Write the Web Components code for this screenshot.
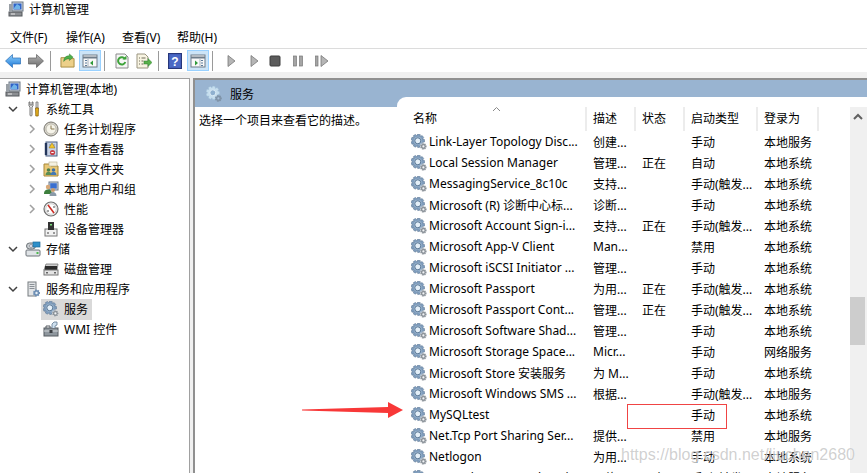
<!DOCTYPE html>
<html lang="zh-CN">
<head>
<meta charset="utf-8">
<title>计算机管理</title>
<style>
  html, body { margin: 0; padding: 0; background: #fff; overflow: hidden; }
  body { font: 12px "Noto Sans", "Noto Sans CJK SC", sans-serif; color: #000; }
</style>
</head>
<body>
<mmc-window>
  <mmc-titlebar slot="title">计算机管理</mmc-titlebar>
  <mmc-menubar slot="menu"></mmc-menubar>
  <mmc-toolbar slot="tools"></mmc-toolbar>
  <tree-pane slot="tree">
    <tree-item level="0" icon="computer">计算机管理(本地)</tree-item>
    <tree-item level="1" arrow="open" icon="tools">系统工具</tree-item>
    <tree-item level="2" arrow="closed" icon="clock">任务计划程序</tree-item>
    <tree-item level="2" arrow="closed" icon="log">事件查看器</tree-item>
    <tree-item level="2" arrow="closed" icon="share">共享文件夹</tree-item>
    <tree-item level="2" arrow="closed" icon="users">本地用户和组</tree-item>
    <tree-item level="2" arrow="closed" icon="perf">性能</tree-item>
    <tree-item level="2" icon="device">设备管理器</tree-item>
    <tree-item level="1" arrow="open" icon="storage">存储</tree-item>
    <tree-item level="2" icon="disk">磁盘管理</tree-item>
    <tree-item level="1" arrow="open" icon="server">服务和应用程序</tree-item>
    <tree-item level="2" icon="gear" selected>服务</tree-item>
    <tree-item level="2" icon="wmi">WMI 控件</tree-item>
  </tree-pane>
  <services-pane slot="content"></services-pane>
  <red-marks slot="marks"></red-marks>
</mmc-window>

<script>
// toothed wheel outline, used by the service icons
function gearPath(cx, cy, outer, inner, teeth) {
  const step = Math.PI * 2 / teeth;
  let d = '';
  for (let i = 0; i < teeth; i++) {
    const a = i * step;
    const pts = [[inner, a - step * .5], [outer, a - step * .26], [outer, a + step * .26], [inner, a + step * .5]];
    pts.forEach(([r, t], j) => {
      d += (i === 0 && j === 0 ? 'M' : 'L') + (cx + r * Math.cos(t)).toFixed(2) + ' ' + (cy + r * Math.sin(t)).toFixed(2);
    });
  }
  return d + 'z';
}
const BIG_GEAR = gearPath(6.8, 6.8, 6.8, 5.1, 9);
const SMALL_GEAR = gearPath(12.4, 12.4, 3.5, 2.5, 7);

const ICONS = {
  computer: `<rect x="4" y="1" width="11" height="9" fill="#cfd6de" stroke="#6d7885"/><rect x="5.5" y="2.5" width="8" height="6" fill="#2f63c8"/><path d="M6 7l3-4 3 2v3H6z" fill="#6fb3e8"/><rect x="1" y="11" width="13" height="4" fill="#8c8f93" stroke="#55585c"/><rect x="3" y="12.5" width="4" height="1" fill="#e8e8e8"/><rect x="1" y="3" width="3" height="8" fill="#9aa0a6"/>`,
  tools: `<path d="M4 1v4l1 1v8a1 1 0 0 0 2 0V6l1-1V1L7 1v3H5V1z" fill="#e8e8e8" stroke="#6b6b6b" stroke-width=".9"/><path d="M11 1h2v6h-2z" fill="#d8d8d8" stroke="#777" stroke-width=".8"/><path d="M10.5 7h3l-.3 8h-2.4z" fill="#e2ad1d" stroke="#8a6410" stroke-width=".8"/>`,
  clock: `<circle cx="8" cy="8" r="7" fill="#d9d6cc" stroke="#77756e"/><circle cx="8" cy="8" r="5" fill="#f6f4ea" stroke="#a9a69b" stroke-width=".7"/><path d="M8 4.5V8h3.5" fill="none" stroke="#8a7a50" stroke-width="1"/>`,
  log: `<rect x="3" y="1" width="11" height="14" fill="#c9d4e6" stroke="#4b5f82"/><path d="M3 2v12" stroke="#24365a" stroke-width="2.4"/><path d="M6 4h6M6 6h6" stroke="#7d8ea8"/><path d="M9 2l3 5H6z" fill="#f2c52e" stroke="#9a7a10" stroke-width=".5"/><circle cx="9.5" cy="11.5" r="2.6" fill="#c8434b"/><path d="M8.3 11.5h2.4" stroke="#fff"/>`,
  share: `<path d="M1 3h6l1 2h7v10H1z" fill="#e9c877" stroke="#a78738"/><rect x="6" y="1" width="8" height="4" fill="#f5f1e2" stroke="#b7ad8c" stroke-width=".6"/><circle cx="5.5" cy="9" r="1.8" fill="#4f7f4a"/><path d="M2.5 14c0-2.5 1.5-3 3-3s3 .5 3 3z" fill="#5a8d52"/><circle cx="10.5" cy="9" r="1.8" fill="#3f6fa8"/><path d="M7.5 14c0-2.5 1.5-3 3-3s3 .5 3 3z" fill="#4378b5"/>`,
  users: `<rect x="6" y="1" width="9" height="8" fill="#cfd9e6" stroke="#6c7a8c"/><rect x="7.2" y="2.2" width="6.6" height="5.4" fill="#3a6fd0"/><circle cx="5" cy="6" r="2.2" fill="#d8a878"/><path d="M1 13c0-3.5 2-4.5 4-4.5S9 9.500 9 13z" fill="#3d7f3d"/><circle cx="10" cy="9" r="2" fill="#c99a6c"/><path d="M6.500 15c0-3 1.800-4 3.500-4s3.500 1 3.500 4z" fill="#8a9aa8"/>`,
  perf: `<circle cx="8" cy="8" r="7" fill="#eeeeee" stroke="#6f6f6f" stroke-width="1.200"/><circle cx="8" cy="8" r="5.200" fill="#fff" stroke="#bbb" stroke-width=".6"/><path d="M5 4l6 8" stroke="#cc2a22" stroke-width="1.500"/><path d="M5 9v2M11 5v2" stroke="#333" stroke-width=".9"/>`,
  device: `<rect x="2" y="8" width="12" height="7" fill="#f1f1f1" stroke="#777"/><rect x="5" y="1" width="6" height="8" fill="#333"/><rect x="7" y="3" width="2" height="1.500" fill="#7de07d"/><rect x="4" y="11" width="2" height="2" fill="#999"/><rect x="10" y="11" width="2" height="2" fill="#999"/>`,
  storage: `<rect x="1" y="9" width="14" height="6" rx="1" fill="#dfe3e6" stroke="#6d7378"/><rect x="1.500" y="2" width="9" height="6" rx="3" fill="#c7ccd0" stroke="#6d7378"/><circle cx="6" cy="5" r="1.500" fill="#eef" stroke="#777" stroke-width=".6"/><rect x="8" y="1" width="7" height="5" fill="#2e8fc9" stroke="#1d6a99" stroke-width=".7"/><rect x="11.500" y="11" width="2" height="2" fill="#4db84d"/>`,
  disk: `<path d="M3 3h12l-1 6H1z" fill="#cfcfcf" stroke="#777" stroke-width=".8"/><rect x="2" y="5" width="12" height="4" fill="#2c2c2c"/><rect x="1" y="9" width="14" height="5" fill="#e4e4e4" stroke="#777"/><rect x="3" y="11" width="2" height="1.500" fill="#666"/><rect x="11" y="11" width="2" height="1.500" fill="#666"/>`,
  server: `<rect x="3" y="1" width="8" height="14" fill="#e2e4e6" stroke="#777c80"/><path d="M4.500 3.500h5M4.500 5.500h5M4.500 7.500h5" stroke="#8a9096"/><path d="${gearPath(11.5, 12, 3.6, 2.6, 7)}" fill="#6f90b5"/><circle cx="11.500" cy="12" r="1.200" fill="#e4eef6"/>`,
  gear: `<path d="${BIG_GEAR}" fill="#7f9dbd" stroke="#56708c" stroke-width=".5"/><circle cx="6.800" cy="6.800" r="4" fill="#9db6cf"/><circle cx="6.800" cy="6.800" r="3" fill="#e4eff8" stroke="#5a7896"/><path d="${SMALL_GEAR}" fill="#8b9299" stroke="#fff" stroke-width=".4"/><circle cx="12.400" cy="12.400" r="1.100" fill="#f2f4f6"/>`,
  gearsoft: `<path d="${BIG_GEAR}" fill="#c6deee" stroke="#9fc0da" stroke-width=".4"/><circle cx="6.800" cy="6.800" r="3" fill="#8fb0cf" stroke="#dcecf6"/><path d="${SMALL_GEAR}" fill="#7f93a8"/><circle cx="12.400" cy="12.400" r="1.100" fill="#a9bfd7"/>`,
  wmi: `<rect x="1" y="7" width="14" height="8" fill="#8f979e" stroke="#555b60"/><path d="M1 10h14" stroke="#d4d8db"/><rect x="6.500" y="9" width="3" height="3" fill="#3b3f43"/><path d="M9 7V3l2-2h3v3l-2 1v2" fill="#cfe0ee" stroke="#5f7a92" stroke-width=".8"/><path d="M3 7V5h4v2" fill="none" stroke="#555b60"/>`,
  back: `<defs><linearGradient id="b" x1="0" y1="0" x2="0" y2="1"><stop offset="0" stop-color="#8fd0fb"/><stop offset="1" stop-color="#1d78d8"/></linearGradient></defs><path d="M.5 8L7.500 1.500V5H15.500v6H7.500v3.500z" fill="url(#b)" stroke="#2a6db5" stroke-width=".7"/>`,
  forward: `<defs><linearGradient id="f" x1="0" y1="0" x2="0" y2="1"><stop offset="0" stop-color="#b5b5b5"/><stop offset="1" stop-color="#6a6a6a"/></linearGradient></defs><path d="M15.500 8L8.500 1.500V5H.5v6h8v3.500z" fill="url(#f)" stroke="#5d5d5d" stroke-width=".7"/>`,
  up: `<path d="M1 5h5l1 1h8v9H1z" fill="#edd08a" stroke="#a68a3e"/><path d="M4 9c0-4 2-6 6-6V1l4 3.500L10 8V6C7 6 5.500 7 4 9z" fill="#4fb04a" stroke="#2f7d2f" stroke-width=".5"/>`,
  refresh: `<path d="M2 1h9l3 3v11H2z" fill="#f6f6f6" stroke="#8a8a8a"/><path d="M11 6a3.700 3.700 0 1 0 .3 3" fill="none" stroke="#3ea33a" stroke-width="2"/><path d="M8.500 6.500h4V2.500z" fill="#3ea33a"/>`,
  exportlist: `<path d="M1 1h8l3 3v11H1z" fill="#f8f4e2" stroke="#9a9480"/><path d="M3 5h1M3 8h1M3 11h1M5.500 5h4M5.500 8h2M5.500 11h2" stroke="#6f6a58"/><path d="M8 8h4V5.500L16 9.500l-4 4V11H8z" fill="#58b04a" stroke="#2f7d2f" stroke-width=".5"/>`,
  help: `<rect x=".5" y=".5" width="13" height="15" fill="#3e57b0" stroke="#27377a"/><rect x="1.500" y="1.500" width="11" height="13" fill="#4a68c4"/><text x="7" y="12.500" font-size="12" font-weight="700" font-family="Liberation Sans, sans-serif" text-anchor="middle" fill="#fff">?</text>`,
  showtree: `<rect x="1" y="2" width="14" height="12" fill="#f8f8f8" stroke="#6f7d8a"/><path d="M1 4.500h14" stroke="#6f7d8a" stroke-width="2"/><path d="M3 7h2v1H3zM3 9.500h2v1H3zM3 12h2v1H3z" fill="#5a7a9a"/><path d="M6 6v7" stroke="#a8b4bf"/><path d="M11 7.500v5l-3-2.500z" fill="#2f9a3a"/>`,
  showaction: `<rect x="1" y="2" width="14" height="12" fill="#f8f8f8" stroke="#6f7d8a"/><path d="M1 4.500h14" stroke="#6f7d8a" stroke-width="2"/><path d="M11 7h2v1h-2zM11 9.500h2v1h-2zM11 12h2v1h-2z" fill="#5a7a9a"/><path d="M10 6v7" stroke="#a8b4bf"/><path d="M5 7.500v5l3-2.500z" fill="#2f9a3a"/>`,
  play: `<path d="M4 2.500L11 8l-7 5.500z" fill="#b5b5b5" stroke="#777" stroke-width=".8"/>`,
  stop: `<rect x="3" y="3" width="10" height="10" rx="1" fill="#5c5c5c" stroke="#3d3d3d"/>`,
  pause: `<rect x="3.500" y="3" width="3" height="10" fill="#a5a5a5" stroke="#777" stroke-width=".7"/><rect x="9.500" y="3" width="3" height="10" fill="#a5a5a5" stroke="#777" stroke-width=".7"/>`,
  resume: `<rect x="1.500" y="3" width="2.500" height="10" fill="#a5a5a5" stroke="#777" stroke-width=".7"/><path d="M7 2.500L14 8l-7 5.500z" fill="#b5b5b5" stroke="#777" stroke-width=".8"/>`
};

class MmcIcon extends HTMLElement {
  connectedCallback() {
    const size = this.getAttribute('size') || 16;
    const root = this.shadowRoot || this.attachShadow({mode: 'open'});
    root.innerHTML = `
      <style>
        :host { display: inline-flex; flex: none; width: ${size}px; height: ${size}px; }
        svg { display: block; width: 100%; height: 100%; }
      </style>
      <svg viewBox="0 0 16 16">${ICONS[this.getAttribute('name')] || ''}</svg>
    `;
  }
}
customElements.define('mmc-icon', MmcIcon);

class MmcWindow extends HTMLElement {
  constructor() {
    super();
    this.attachShadow({mode: 'open'}).innerHTML = `
      <style>
        :host { display: flex; flex-direction: column; position: relative; width: 867px; height: 473px; overflow: hidden; background: #fff; }
        .gap { flex: none; height: 6px; background: #f0f0f0; }
        .main { flex: 1; min-height: 0; display: flex; background: #f0f0f0; }
      </style>
      <slot name="title"></slot>
      <slot name="menu"></slot>
      <slot name="tools"></slot>
      <div class="gap"></div>
      <div class="main">
        <slot name="tree"></slot>
        <slot name="content"></slot>
      </div>
      <slot name="marks"></slot>
    `;
  }
}
customElements.define('mmc-window', MmcWindow);

class MmcTitlebar extends HTMLElement {
  constructor() {
    super();
    this.attachShadow({mode: 'open'}).innerHTML = `
      <style>
        :host { display: flex; align-items: flex-start; height: 25px; padding: 1px 0 0 8px; box-sizing: border-box; gap: 5px; line-height: 17px; }
      </style>
      <mmc-icon name="computer"></mmc-icon><span><slot></slot></span>
    `;
  }
}
customElements.define('mmc-titlebar', MmcTitlebar);

class MmcMenubar extends HTMLElement {
  constructor() {
    super();
    this.attachShadow({mode: 'open'}).innerHTML = `
      <style>
        :host { display: flex; height: 23px; padding-left: 10px; align-items: center; }
        span { width: 55px; flex: none; white-space: nowrap; }
        span:first-child { width: 54px; } span:nth-child(2) { width: 56px; } span:nth-child(3) { width: 56px; }
      </style>
      <span>文件(F)</span><span>操作(A)</span><span>查看(V)</span><span>帮助(H)</span>
    `;
  }
}
customElements.define('mmc-menubar', MmcMenubar);

class MmcToolbar extends HTMLElement {
  constructor() {
    super();
    const items = [
      ['back', 5, 16], ['forward', 28, 16], ['|', 50], ['up', 60, 15], ['showtree', 79, 0, 1], ['|', 104],
      ['refresh', 114, 16], ['exportlist', 136, 16], ['|', 158], ['help', 168, 16], ['showaction', 187, 0, 1], ['|', 212],
      ['play', 224, 16], ['play', 247, 16], ['stop', 267, 16], ['pause', 290, 16], ['resume', 314, 16]
    ];
    // items are placed in order, the margin is what is left over from the previous one
    let x = 0;
    const html = items.map(([name, left, size, active]) => {
      const gap = left - x;
      if (name === '|') { x = left + 1; return `<i style="margin-left:${gap}px"></i>`; }
      if (active) { x = left + 22; return `<b style="margin-left:${gap}px"><mmc-icon name="${name}"></mmc-icon></b>`; }
      x = left + size;
      return `<mmc-icon name="${name}" size="${size}" style="margin-left:${gap}px"></mmc-icon>`;
    }).join('');
    this.attachShadow({mode: 'open'}).innerHTML = `
      <style>
        :host { display: flex; align-items: center; height: 24px; border-top: 1px solid #dcdcdc; box-sizing: border-box; background: #fff; }
        i { flex: none; width: 1px; height: 20px; background: #9a9a9a; }
        b { flex: none; display: flex; align-items: center; justify-content: center; width: 22px; height: 21px; box-sizing: border-box; background: #cce4f7; border: 1px solid #99d1ff; }
      </style>
      ${html}
    `;
  }
}
customElements.define('mmc-toolbar', MmcToolbar);

class TreePane extends HTMLElement {
  constructor() {
    super();
    this.attachShadow({mode: 'open'}).innerHTML = `
      <style>
        :host { display: block; flex: none; width: 190px; box-sizing: border-box; background: #fff; border-top: 1px solid #a0a0a0; border-right: 1px solid #a0a0a0; overflow: hidden; }
      </style>
      <slot></slot>
    `;
  }
}
customElements.define('tree-pane', TreePane);

class TreeItem extends HTMLElement {
  connectedCallback() {
    const level = +this.getAttribute('level');
    const arrow = this.getAttribute('arrow');
    const pad = [3, 4, 22][level];
    const marker = level === 0 ? '' : `<span class="marker">${
      arrow === 'open' ? '<svg viewBox="0 0 10 10"><path d="M1 3l4 4 4-4" fill="none" stroke="#404040" stroke-width="1.500"/></svg>' :
      arrow === 'closed' ? '<svg viewBox="0 0 10 10"><path d="M4 1l4 4-4 4" fill="none" stroke="#a0a0a0" stroke-width="1.500"/></svg>' : ''
    }</span>`;
    this.attachShadow({mode: 'open'}).innerHTML = `
      <style>
        :host { display: flex; align-items: center; height: 20px; padding-left: ${pad}px; white-space: nowrap; }
        .marker { flex: none; width: 15px; padding-left: 4px; display: flex; align-items: center; }
        svg { display: block; width: 10px; height: 10px; }
        .cell { display: flex; align-items: center; gap: 5px; height: 21px; padding: 0 4px 0 2px; }
        :host([selected]) .cell { background: #d9d9d9; }
      </style>
      ${marker}
      <span class="cell"><mmc-icon name="${this.getAttribute('icon')}"></mmc-icon><span><slot></slot></span></span>
    `;
  }
}
customElements.define('tree-item', TreeItem);

class ServicesPane extends HTMLElement {
  constructor() {
    super();
    this.attachShadow({mode: 'open'}).innerHTML = `
      <style>
        :host { display: flex; flex: none; width: 674px; margin-left: 3px; box-sizing: border-box; background: #fff; border-top: 2px solid #909090; border-left: 2px solid #909090; overflow: hidden; }
        .left { flex: none; width: 202px; }
        .head { display: flex; align-items: center; gap: 8px; height: 27px; padding-left: 11px; background: #99b4d1; }
        .desc { padding: 4px 0 0 4px; white-space: nowrap; }
        .right { flex: 1; min-width: 0; background: #99b4d1; padding-top: 17px; }
      </style>
      <div class="left">
        <div class="head"><mmc-icon name="gearsoft"></mmc-icon><span>服务</span></div>
        <div class="desc">选择一个项目来查看它的描述。</div>
      </div>
      <div class="right"><services-list></services-list></div>
    `;
  }
}
customElements.define('services-pane', ServicesPane);

const SERVICES = [
  ['Link-Layer Topology Disc...', '创建...', '', '手动', '本地服务'],
  ['Local Session Manager', '管理...', '正在', '自动', '本地系统'],
  ['MessagingService_8c10c', '支持...', '', '手动(触发...', '本地系统'],
  ['Microsoft (R) 诊断中心标...', '诊断...', '', '手动', '本地系统'],
  ['Microsoft Account Sign-i...', '支持...', '正在', '手动(触发...', '本地系统'],
  ['Microsoft App-V Client', 'Man...', '', '禁用', '本地系统'],
  ['Microsoft iSCSI Initiator ...', '管理...', '', '手动', '本地系统'],
  ['Microsoft Passport', '为用...', '正在', '手动(触发...', '本地系统'],
  ['Microsoft Passport Cont...', '管理...', '正在', '手动(触发...', '本地系统'],
  ['Microsoft Software Shad...', '管理...', '', '手动', '本地系统'],
  ['Microsoft Storage Space...', 'Micr...', '', '手动', '网络服务'],
  ['Microsoft Store 安装服务', '为 M...', '', '手动', '本地系统'],
  ['Microsoft Windows SMS ...', '根据...', '', '手动(触发...', '本地服务'],
  ['MySQLtest', '', '', '手动', '本地系统'],
  ['Net.Tcp Port Sharing Ser...', '提供...', '', '禁用', '本地服务'],
  ['Netlogon', '为用...', '', '手动', '本地系统'],
  ['Network Connected Devic...', '网络...', '正在', '手动(触发...', '本地服务']
];

const COLUMNS = 'grid-template-columns: 175px 49px 49px 73px 61px;';

class ServicesList extends HTMLElement {
  constructor() {
    super();
    const rows = SERVICES.map(r => `
      <div class="row">
        <span class="name"><mmc-icon name="gear"></mmc-icon><span>${r[0]}</span></span>
        <span>${r[1]}</span><span>${r[2]}</span><span>${r[3]}</span><span>${r[4]}</span>
      </div>`).join('');
    this.attachShadow({mode: 'open'}).innerHTML = `
      <style>
        :host { display: flex; position: relative; height: 100%; min-height: 376px; background: #fff; border-top-left-radius: 9px; padding-top: 10px; box-sizing: border-box; overflow: hidden; }
        .table { flex: 1; min-width: 0; padding-left: 14px; white-space: nowrap; }
        .head, .row { display: grid; ${COLUMNS} }
        .head { height: 24px; align-items: center; }
        .head span { height: 24px; line-height: 24px; padding-left: 7px; margin-right: -1px; border-right: 2px solid #ececec; box-sizing: border-box; }
        .head span:first-child { padding-left: 2px; position: relative; }
        .head svg { position: absolute; left: 81px; top: -1px; width: 9px; height: 6px; }
        .row { height: 21px; align-items: center; }
        .row > span { padding-left: 7px; overflow: hidden; }
        .row > .name { padding-left: 0; display: flex; align-items: center; gap: 2px; }
        .scroll { flex: none; width: 17px; background: #f0f0f0; position: relative; }
        .scroll svg { position: absolute; left: 3px; top: 6px; width: 10px; height: 7px; }
        .thumb { position: absolute; left: 0; top: 190px; width: 15px; height: 48px; background: #cdcdcd; }
      </style>
      <div class="table">
        <div class="head">
          <span>名称<svg viewBox="0 0 9 6"><path d="M1 5l3.500-3.500L8 5" fill="none" stroke="#8a8a8a"/></svg></span>
          <span>描述</span><span>状态</span><span>启动类型</span><span>登录为</span>
        </div>
        ${rows}
      </div>
      <div class="scroll">
        <svg viewBox="0 0 10 7"><path d="M1 6l4-4 4 4" fill="none" stroke="#606060" stroke-width="2"/></svg>
        <div class="thumb"></div>
      </div>
    `;
  }
}
customElements.define('services-list', ServicesList);

// the marks somebody drew on the screenshot, they lie over the list
class RedMarks extends HTMLElement {
  constructor() {
    super();
    this.attachShadow({mode: 'open'}).innerHTML = `
      <style>
        :host { display: block; position: absolute; left: 0; top: 0; width: 867px; height: 473px; pointer-events: none; }
        svg { position: absolute; left: 302px; top: 402px; width: 102px; height: 16px; }
        .box { position: absolute; left: 627px; top: 404px; width: 100px; height: 25px; border: 1px solid #f04444; box-sizing: border-box; }
        .mark { position: absolute; left: 621px; top: 446px; font: 16px "Liberation Sans", sans-serif; color: rgba(150,150,150,.45); text-shadow: 0 0 1px #fff; white-space: nowrap; }
      </style>
      <svg viewBox="0 0 102 16"><path d="M0 7.500L86 5V0L101 8 86 16V11L0 8.500z" fill="#f83838"/></svg>
      <div class="box"></div>
      <div class="mark">https://blog.csdn.net/liuchen2680</div>
    `;
  }
}
customElements.define('red-marks', RedMarks);
</script>
</body>
</html>
